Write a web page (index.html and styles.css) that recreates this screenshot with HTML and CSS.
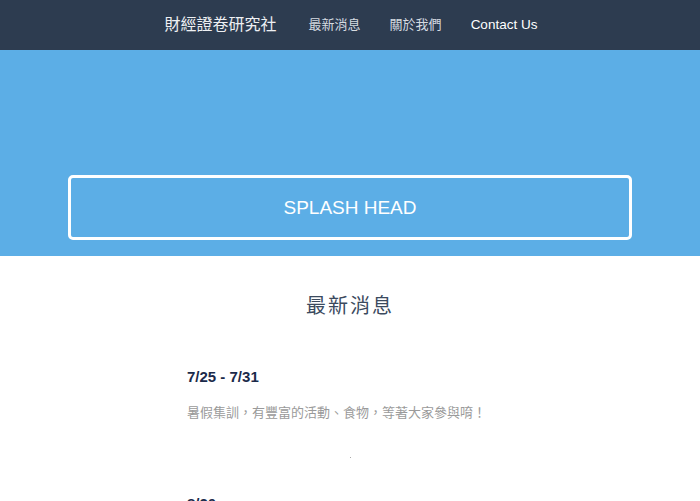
FILE: index.html
```html
<!DOCTYPE html>
<html lang="zh-Hant">
<head>
<meta charset="utf-8">
<title>財經證卷研究社</title>
<link rel="stylesheet" href="styles.css">
</head>
<body>
<header class="nav">
  <a class="brand" href="#">財經證卷研究社</a>
  <nav class="links">
    <a class="link" href="#">最新消息</a>
    <a class="link" href="#">關於我們</a>
    <a class="link link-en" href="#">Contact Us</a>
  </nav>
</header>
<section class="splash">
  <div class="splash-box">SPLASH HEAD</div>
</section>
<main class="content">
  <h2 class="section-title">最新消息</h2>
  <article class="news">
    <h3 class="news-date">7/25 - 7/31</h3>
    <p class="news-text">暑假集訓，有豐富的活動、食物，等著大家參與唷！</p>
  </article>
  <div class="sep"></div>
  <article class="news">
    <h3 class="news-date">8/20</h3>
    <p class="news-text">期初社員大會</p>
  </article>
</main>
</body>
</html>
```

FILE: styles.css
```css
* { box-sizing: border-box; }
html, body { margin: 0; padding: 0; }
body {
  font-family: "Liberation Sans", "Noto Sans CJK TC", sans-serif;
  background: #fff;
  overflow: hidden;
}
a { text-decoration: none; }

.nav {
  height: 50px;
  background: #2d3c50;
  display: flex;
  align-items: center;
  justify-content: center;
  gap: 32px;
  padding-left: 2px;
}
.brand {
  color: #eef0f3;
  font-size: 16px;
  line-height: 20px;
}
.links {
  display: flex;
  gap: 29px;
  align-items: center;
}
.link {
  color: #d6dbe1;
  font-size: 13px;
  line-height: 20px;
}
.link-en {
  color: #ffffff;
  font-size: 13.5px;
}

.splash {
  background: #5caee6;
  padding: 125px 68px 16px;
}
.splash-box {
  height: 65px;
  border: 3px solid #ffffff;
  border-radius: 5px;
  display: flex;
  align-items: center;
  justify-content: center;
  color: #ffffff;
  font-size: 19px;
  font-weight: 300;
}

.content {
  padding: 36px 187px 0;
}
.section-title {
  margin: 0 0 47px;
  text-align: center;
  font-weight: 400;
  font-size: 20px;
  letter-spacing: 2px;
  line-height: 28px;
  color: #3b4a5e;
}
.news-date {
  margin: 0;
  font-size: 15px;
  line-height: 20px;
  font-weight: 700;
  color: #1b2a4a;
}
.news-text {
  margin: 16px 0 0;
  font-size: 13px;
  line-height: 20px;
  color: #9a9a9a;
}
.sep {
  width: 1px;
  height: 1px;
  background: #aaa;
  margin: 34px auto 36px;
}
```
